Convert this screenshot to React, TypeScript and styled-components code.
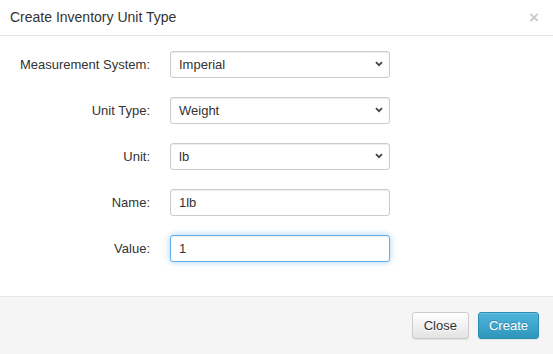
import React from "react";
import styled, { createGlobalStyle } from "styled-components";

const Global = createGlobalStyle`
  html, body { margin: 0; padding: 0; background: #fff; }
  body { font-family: "Liberation Sans", Arial, Helvetica, sans-serif; color: #333; }
  * { box-sizing: border-box; }
`;

const Modal = styled.div`
  width: 553px;
  height: 354px;
  display: flex;
  flex-direction: column;
  background: #fff;
`;

const Header = styled.div`
  height: 36px;
  display: flex;
  align-items: center;
  justify-content: space-between;
  padding: 0 14px 1px 10px;
  border-bottom: 1px solid #e5e5e5;
`;

const Title = styled.h4`
  margin: 0;
  font-size: 14px;
  font-weight: normal;
  color: #333;
`;

const CloseX = styled.button`
  border: 0;
  background: none;
  padding: 0;
  font-family: "Liberation Sans", Arial, sans-serif;
  font-size: 17px;
  font-weight: bold;
  line-height: 1;
  color: #000;
  opacity: 0.2;
  cursor: pointer;
`;

const Body = styled.div`
  flex: 1;
  padding: 15px 0 0 0;
  display: flex;
  flex-direction: column;
  gap: 19px;
`;

const Row = styled.div`
  display: grid;
  grid-template-columns: 150px 220px;
  column-gap: 20px;
  align-items: center;
`;

const Label = styled.label`
  text-align: right;
  font-size: 13px;
  color: #333;
`;

const Field = styled.div`
  position: relative;
  height: 27px;
`;

const controlCss = `
  width: 220px;
  height: 27px;
  border: 1px solid #ccc;
  border-radius: 3px;
  background: #fff;
  font-family: "Liberation Sans", Arial, Helvetica, sans-serif;
  font-size: 13px;
  color: #333;
  padding: 0 8px;
  outline: none;
  box-shadow: inset 0 1px 1px rgba(0,0,0,.075);
`;

const Select = styled.select`
  ${controlCss}
  appearance: none;
  -webkit-appearance: none;
`;

const Input = styled.input<{ $focused?: boolean }>`
  ${controlCss}
  ${(p) =>
    p.$focused
      ? `border-color: #66afe9; box-shadow: inset 0 1px 1px rgba(0,0,0,.075), 0 0 6px rgba(102,175,233,.6);`
      : ""}
`;

const Chevron = styled.svg`
  position: absolute;
  right: 7px;
  top: 10px;
  pointer-events: none;
`;

const Footer = styled.div`
  height: 58px;
  border-top: 1px solid #e5e5e5;
  background: #f5f5f5;
  display: flex;
  justify-content: flex-end;
  align-items: flex-start;
  gap: 9px;
  padding: 15px 14px 0 0;
`;

const Button = styled.button<{ $variant?: "default" | "info" }>`
  height: 27px;
  border-radius: 3px;
  font-family: "Liberation Sans", Arial, Helvetica, sans-serif;
  font-size: 13px;
  cursor: pointer;
  ${(p) =>
    p.$variant === "info"
      ? `
    padding: 0 10px;
    color: #fff;
    border: 1px solid #2a8db3;
    background: linear-gradient(#50b5db, #2e95bc);
    text-shadow: 0 -1px 0 rgba(0,0,0,.2);
    box-shadow: inset 0 1px 0 rgba(255,255,255,.15), 0 1px 1px rgba(0,0,0,.075);
  `
      : `
    padding: 0 11px;
    color: #333;
    border: 1px solid #ccc;
    background: linear-gradient(#fff, #e3e3e3);
    text-shadow: 0 1px 0 #fff;
    box-shadow: inset 0 1px 0 rgba(255,255,255,.15), 0 1px 1px rgba(0,0,0,.075);
  `}
`;

const Caret = () => (
  <Chevron width="8" height="6" viewBox="0 0 8 6">
    <path d="M1 1.2 L4 4.2 L7 1.2" fill="none" stroke="#444" strokeWidth="1.8" />
  </Chevron>
);

const SelectField = ({ value }: { value: string }) => (
  <Field>
    <Select defaultValue={value}>
      <option>{value}</option>
    </Select>
    <Caret />
  </Field>
);

export default function App() {
  return (
    <>
      <Global />
      <Modal>
        <Header>
          <Title>Create Inventory Unit Type</Title>
          <CloseX>×</CloseX>
        </Header>
        <Body>
          <Row>
            <Label>Measurement System:</Label>
            <SelectField value="Imperial" />
          </Row>
          <Row>
            <Label>Unit Type:</Label>
            <SelectField value="Weight" />
          </Row>
          <Row>
            <Label>Unit:</Label>
            <SelectField value="lb" />
          </Row>
          <Row>
            <Label>Name:</Label>
            <Field>
              <Input defaultValue="1lb" />
            </Field>
          </Row>
          <Row>
            <Label>Value:</Label>
            <Field>
              <Input defaultValue="1" $focused />
            </Field>
          </Row>
        </Body>
        <Footer>
          <Button $variant="default">Close</Button>
          <Button $variant="info">Create</Button>
        </Footer>
      </Modal>
    </>
  );
}
